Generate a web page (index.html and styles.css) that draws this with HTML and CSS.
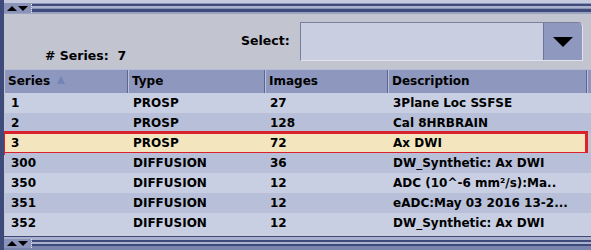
FILE: index.html
```html
<!DOCTYPE html>
<html lang="en">
<head>
  <meta charset="UTF-8">
  <title>Series List</title>
  <link rel="stylesheet" href="styles.css">
</head>
<body>
  <div class="frame">
    <div class="splitter top">
      <div class="arrows"><span class="up"></span><span class="down"></span></div>
    </div>

    <div class="toolbar">
      <div class="count"># Series:&nbsp; 7</div>
      <div class="select-label">Select:</div>
      <div class="combo">
        <div class="combo-btn"><span class="tri"></span></div>
      </div>
    </div>

    <div class="table">
      <div class="row head">
        <div class="cell">Series <span class="sort"></span></div>
        <div class="cell">Type</div>
        <div class="cell">Images</div>
        <div class="cell">Description</div>
        <div class="cell"></div>
      </div>
      <div class="row light">
        <div class="cell first">1</div><div class="cell">PROSP</div><div class="cell">27</div><div class="cell">3Plane Loc SSFSE</div><div class="cell"></div>
      </div>
      <div class="row dark">
        <div class="cell first">2</div><div class="cell">PROSP</div><div class="cell">128</div><div class="cell">Cal 8HRBRAIN</div><div class="cell"></div>
      </div>
      <div class="row sel">
        <div class="cell first">3</div><div class="cell">PROSP</div><div class="cell">72</div><div class="cell">Ax DWI</div><div class="cell"></div>
      </div>
      <div class="row dark">
        <div class="cell first">300</div><div class="cell">DIFFUSION</div><div class="cell">36</div><div class="cell">DW_Synthetic: Ax DWI</div><div class="cell"></div>
      </div>
      <div class="row light">
        <div class="cell first">350</div><div class="cell">DIFFUSION</div><div class="cell">12</div><div class="cell">ADC (10^-6 mm²/s):Ma..</div><div class="cell"></div>
      </div>
      <div class="row dark">
        <div class="cell first">351</div><div class="cell">DIFFUSION</div><div class="cell">12</div><div class="cell">eADC:May 03 2016 13-2...</div><div class="cell"></div>
      </div>
      <div class="row light">
        <div class="cell first">352</div><div class="cell">DIFFUSION</div><div class="cell">12</div><div class="cell">DW_Synthetic: Ax DWI</div><div class="cell"></div>
      </div>
      <div class="table-rest"></div>
    </div>

    <div class="splitter bottom">
      <div class="arrows"><span class="up"></span><span class="down"></span></div>
    </div>
  </div>
</body>
</html>
```

FILE: styles.css
```css
html, body {
  margin: 0;
  padding: 0;
}
body {
  width: 591px;
  height: 250px;
  overflow: hidden;
  background: #c2c4d0;
  font-family: "DejaVu Sans", sans-serif;
  font-weight: bold;
  font-size: 12px;
  color: #000;
}

.frame {
  height: 250px;
  border-left: 4px solid #3e4a7a;
  display: flex;
  flex-direction: column;
}

/* splitter bars */
.splitter {
  display: flex;
  align-items: center;
}
.splitter.top {
  height: 14px;
  background: linear-gradient(to bottom,
    #c6cade 0, #c6cade 3px,
    #8e96b8 3px, #8e96b8 4px,
    #3e4a7c 4px, #3e4a7c 6px,
    #a9b1cd 6px, #a9b1cd 8px,
    #8890b4 8px, #8890b4 9px,
    #3e4a7c 9px, #3e4a7c 12px,
    #9aa2c0 12px, #9aa2c0 14px);
}
.splitter.top .arrows {
  margin-top: 2px;
}
.splitter.bottom {
  height: 14px;
  background: linear-gradient(to bottom,
    #3e4a7c 0, #3e4a7c 1px,
    #a9b1cd 1px, #a9b1cd 4px,
    #3e4a7c 4px, #3e4a7c 6px,
    #a9b1cd 6px, #a9b1cd 8px,
    #3e4a7c 8px, #3e4a7c 10px,
    #7a84ac 10px, #7a84ac 14px);
}
.arrows {
  height: 9px;
  width: 27px;
  display: flex;
  align-items: center;
  justify-content: center;
  gap: 1px;
  background: #8a94ba;
  border-right: 1px dotted #e4e7f2;
}
.arrows .up {
  width: 0;
  height: 0;
  border-left: 5px solid transparent;
  border-right: 5px solid transparent;
  border-bottom: 5px solid #000;
}
.arrows .down {
  width: 0;
  height: 0;
  border-left: 5px solid transparent;
  border-right: 5px solid transparent;
  border-top: 5px solid #000;
}

/* top area */
.toolbar {
  height: 55px;
  display: flex;
  align-items: center;
}
.count {
  align-self: flex-end;
  margin: 0 0 6px 41px;
  width: 196px;
  font-size: 12.5px;
}
.select-label {
  font-size: 12.5px;
  margin-bottom: 2px;
}
.combo {
  margin-left: 10px;
  width: 283px;
  height: 39px;
  background: #c9cee1;
  border: 1px solid #7a809c;
  border-right-color: #e0e3ee;
  border-bottom-color: #e0e3ee;
  border-top-right-radius: 5px;
  display: flex;
  justify-content: flex-end;
  box-sizing: border-box;
}
.combo-btn {
  width: 38px;
  background: #8f99c0;
  border-left: 1px solid #6c7498;
  border-top-right-radius: 4px;
  display: flex;
  align-items: center;
  justify-content: center;
}
.tri {
  width: 0;
  height: 0;
  border-left: 10px solid transparent;
  border-right: 10px solid transparent;
  border-top: 10px solid #000;
}

/* table */
.table {
  flex: 1;
  display: flex;
  flex-direction: column;
  padding-left: 1px;
  overflow: hidden;
}
.row {
  display: grid;
  grid-template-columns: 123px 137px 123px 199px 40px;
  height: 20px;
  align-items: center;
  white-space: nowrap;
  flex-shrink: 0;
}
.row .cell {
  padding-left: 5px;
  overflow: hidden;
}
.row .cell.first {
  padding-left: 6px;
}
.row.head {
  height: 24px;
  background: #8e97bd;
  border-top: 1px solid #b4bcd8;
  box-sizing: border-box;
}
.row.head .cell {
  height: 23px;
  line-height: 23px;
  padding-left: 3px;
  border-left: 1px solid #b9c1dd;
  border-right: 1px solid #5b6592;
  box-sizing: border-box;
}
.row.head .cell:first-child {
  border-left: none;
}
.sort {
  display: inline-block;
  vertical-align: 1px;
  margin-left: 3px;
  width: 0;
  height: 0;
  border-left: 4px solid transparent;
  border-right: 4px solid transparent;
  border-bottom: 8px solid #7383b5;
}
.row.light { background: #c9cfe2; }
.row.dark { background: #b8c0d9; }
.row.sel {
  background: #f3e6bf;
  outline: 3px solid #d8222e;
  outline-offset: -1px;
  margin-left: -1px;
  padding-left: 1px;
  width: 582px;
  box-sizing: border-box;
}
.row.sel .cell:last-child {
  display: none;
}
.table-rest {
  height: 4px;
  background: #c9cee0;
  flex-shrink: 0;
}
```
